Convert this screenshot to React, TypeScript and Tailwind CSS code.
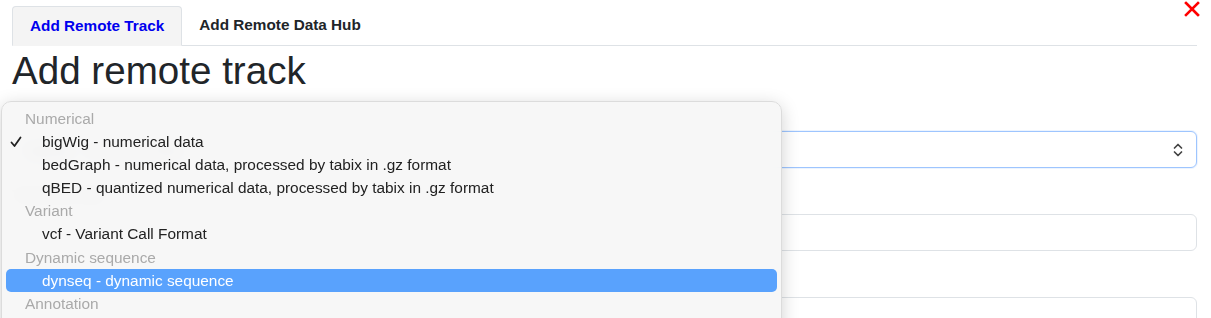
import React from 'react';

type Opt = { label: string; group?: boolean; checked?: boolean; active?: boolean };

const OPTIONS: Opt[] = [
  { label: 'Numerical', group: true },
  { label: 'bigWig - numerical data', checked: true },
  { label: 'bedGraph - numerical data, processed by tabix in .gz format' },
  { label: 'qBED - quantized numerical data, processed by tabix in .gz format' },
  { label: 'Variant', group: true },
  { label: 'vcf - Variant Call Format' },
  { label: 'Dynamic sequence', group: true },
  { label: 'dynseq - dynamic sequence', active: true },
  { label: 'Annotation', group: true },
];

const FONT = { fontFamily: '"Liberation Sans", Arial, Helvetica, sans-serif' };

const App = () => {
  return (
    <div className="relative h-[318px] w-[1211px] overflow-hidden bg-white text-[#212529]" style={FONT}>
      {/* close button */}
      <button className="absolute right-[11px] top-[1px] text-[#ff0000]">
        <svg width="16" height="16" viewBox="0 0 16 16">
          <path d="M2 2 L14 14 M14 2 L2 14" stroke="currentColor" strokeWidth="2.6" strokeLinecap="square" />
        </svg>
      </button>

      <div className="pl-3 pr-[14px] pt-[6px]">
        {/* tabs */}
        <div className="flex border-b border-[#dee2e6]">
          <div className="-mb-px flex h-[40px] items-center rounded-t-[4px] border border-[#dee2e6] border-b-transparent bg-[#f4f4f4] px-[17px] text-[15.3px] font-bold text-[#0000ee]">
            Add Remote Track
          </div>
          <div className="flex h-[39px] items-center px-[17px] text-[15.3px] font-bold text-[#212529]">
            Add Remote Data Hub
          </div>
        </div>

        <h1 className="mt-[2px] text-[38.6px] leading-[1.2] text-[#212529]">Add remote track</h1>

        {/* form behind the open menu */}
        <div className="mt-[6px] flex flex-col">
          <label className="text-[15px] leading-[24px] text-[#cfcfcf]">Track type</label>
          <div className="mt-[7px] flex h-[37px] items-center justify-between rounded-[6px] border border-[#9ec5fe] bg-white px-3 shadow-[0_0_0_1px_rgba(13,110,253,0.08)]">
            <span className="text-[15px]">bigWig - numerical data</span>
            <svg width="10" height="14" viewBox="0 0 10 14" className="mr-[1px]">
              <path d="M1.5 5 L5 1.5 L8.5 5 M1.5 9 L5 12.5 L8.5 9" fill="none" stroke="#444" strokeWidth="1.7" strokeLinecap="round" strokeLinejoin="round" />
            </svg>
          </div>
          <label className="mt-[15px] text-[15px] leading-[24px]">Track file URL</label>
          <div className="mt-[7px] h-[37px] rounded-[6px] border border-[#dee2e6] bg-white" />
          <label className="mt-[15px] text-[15px] leading-[24px]">Track label</label>
          <div className="mt-[7px] h-[37px] rounded-[6px] border border-[#dee2e6] bg-white" />
        </div>
      </div>

      {/* open select menu */}
      <div className="absolute left-[1px] top-[101px] h-[240px] w-[781px] rounded-[10px] border border-[#dcdcdc] bg-[#f7f7f7]/95 px-[4px] pt-[5px] shadow-[0_4px_18px_rgba(0,0,0,0.18)] backdrop-blur">
        {OPTIONS.map((o) => (
          <div
            key={o.label}
            className={
              o.active
                ? 'flex h-[23.1px] items-center rounded-[5px] bg-[#59a2fd] text-[15.4px] text-white'
                : o.group
                  ? 'flex h-[23.1px] items-center text-[15.4px] text-[#aaaaaa]'
                  : 'flex h-[23.1px] items-center text-[15.4px] text-[#222222]'
            }
          >
            <span className="flex w-[36px] shrink-0 items-center pl-[4px]">
              {o.checked && (
                <svg width="12" height="12" viewBox="0 0 12 12">
                  <path d="M1.5 6.5 L4.5 10 L10.5 1.5" fill="none" stroke="#222" strokeWidth="1.8" strokeLinecap="round" strokeLinejoin="round" />
                </svg>
              )}
            </span>
            <span className={o.group ? '-ml-[17px]' : ''}>{o.label}</span>
          </div>
        ))}
      </div>
    </div>
  );
};

export default App;
